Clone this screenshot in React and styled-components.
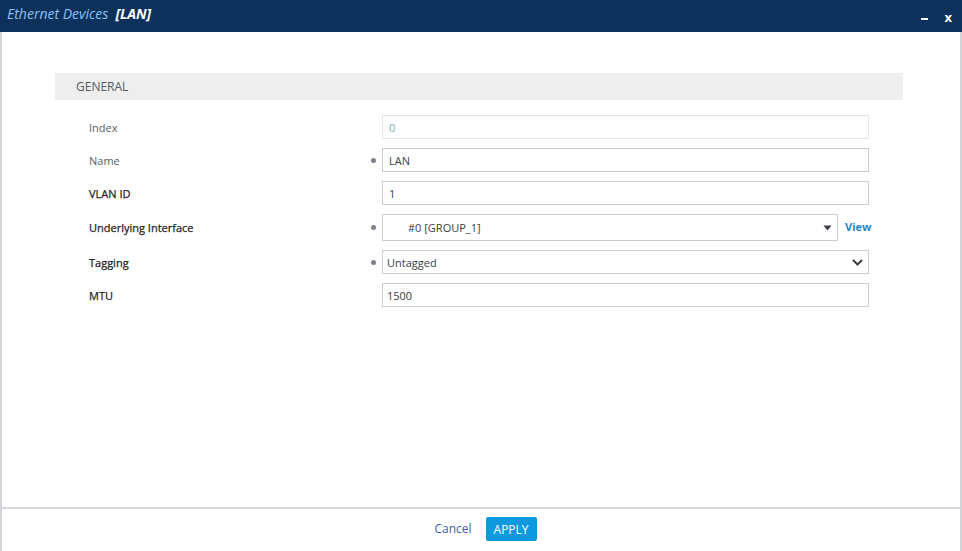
import React from "react";
import styled, { createGlobalStyle } from "styled-components";

const Global = createGlobalStyle`
  html, body { margin: 0; padding: 0; background: #fff; }
  body { font-family: "Open Sans", "Noto Sans", sans-serif; }
  * { box-sizing: border-box; }
`;

const Frame = styled.div`
  width: 962px;
  height: 551px;
  display: flex;
  flex-direction: column;
  background: #fff;
  overflow: hidden;
`;

const Header = styled.div`
  height: 32px;
  flex: none;
  background: #0b315c;
  display: flex;
  align-items: center;
  padding: 0 10px 0 7px;
`;

const Title = styled.div`
  flex: 1;
  font-style: italic;
  font-size: 14px;
  color: #8fc0f2;
  display: flex;
  gap: 7px;
  margin-top: -6px;
`;

const TitleTag = styled.span`
  color: #fff;
  font-weight: 700;
`;

const WinButtons = styled.div`
  display: flex;
  align-items: center;
  gap: 16px;
  color: #fff;
  font-weight: 700;
  font-size: 13px;
  margin-top: 2px;
`;

const MinBar = styled.span`
  width: 7px;
  height: 2px;
  background: #fff;
  display: block;
  margin-top: 3px;
`;

const Body = styled.div`
  flex: 1;
  border-left: 2px solid #d3d5d9;
  border-right: 2px solid #d3d5d9;
  display: flex;
  flex-direction: column;
`;

const Content = styled.div`
  flex: 1;
  padding-top: 41px;
`;

const SectionBar = styled.div`
  margin-left: 53px;
  width: 848px;
  height: 27px;
  background: #eeeeee;
  display: flex;
  align-items: center;
  padding-left: 21px;
  font-size: 12px;
  color: #555a60;
`;

const Form = styled.div`
  display: grid;
  grid-template-columns: 278px 15px 487px;
  padding-left: 87px;
  margin-top: 15px;
  row-gap: 9px;
  align-items: center;
`;

const Label = styled.div`
  font-size: 11px;
  color: ${(p) => (p.$strong ? "#1f2328" : "#5a5e64")};
  -webkit-text-stroke: ${(p) => (p.$strong ? "0.25px #1f2328" : "0")};
`;

const Dot = styled.div`
  width: 5px;
  height: 5px;
  border-radius: 50%;
  background: ${(p) => (p.$show ? "#7d828a" : "transparent")};
  margin-left: 4px;
`;

const Field = styled.div`
  height: ${(p) => (p.$tall ? 27 : 24)}px;
  border: 1px solid ${(p) => (p.$light ? "#e3e5e8" : "#c9cdd3")};
  display: flex;
  align-items: center;
  padding-left: ${(p) => p.$indent || 6}px;
  padding-right: ${(p) => p.$endPad || 6}px;
  font-size: 11px;
  color: ${(p) => (p.$muted ? "#7fa7b8" : "#3a3e44")};
  background: #fff;
`;

const SelectField = styled(Field)`
  width: 456px;
  flex: none;
`;

const FieldText = styled.span`
  flex: 1;
`;

const InlineRow = styled.div`
  display: flex;
  align-items: center;
  gap: 7px;
`;

const ViewLink = styled.span`
  color: #1f87c9;
  font-weight: 700;
  font-size: 11px;
  margin-top: -3px;
`;

const Footer = styled.div`
  height: 44px;
  flex: none;
  border-top: 2px solid #d5d8dc;
  display: flex;
  justify-content: center;
  align-items: flex-start;
  padding-top: 8px;
  gap: 14px;
  padding-left: 9px;
`;

const CancelLink = styled.span`
  color: #3a5fb0;
  font-size: 12px;
  line-height: 24px;
`;

const ApplyButton = styled.button`
  height: 24px;
  padding: 0 8px;
  border: none;
  border-radius: 2px;
  background: #0e98df;
  color: #fff;
  font-family: inherit;
  font-size: 12px;
`;

const Caret = () => (
  <svg width="9" height="6" viewBox="0 0 9 6">
    <path d="M0.5 0.5 H8.5 L4.5 5.5 Z" fill="#3a3e44" />
  </svg>
);

const Chevron = () => (
  <svg width="11" height="7" viewBox="0 0 11 7">
    <path d="M1 1 L5.5 5.5 L10 1" stroke="#3a3e44" strokeWidth="2" fill="none" />
  </svg>
);

export default function App() {
  return (
    <Frame>
      <Global />
      <Header>
        <Title>
          <span>Ethernet Devices</span>
          <TitleTag>[LAN]</TitleTag>
        </Title>
        <WinButtons>
          <MinBar />
          <span>x</span>
        </WinButtons>
      </Header>
      <Body>
        <Content>
          <SectionBar>GENERAL</SectionBar>
          <Form>
            <Label>Index</Label>
            <Dot />
            <Field $light $muted>0</Field>

            <Label>Name</Label>
            <Dot $show />
            <Field>LAN</Field>

            <Label $strong>VLAN ID</Label>
            <Dot />
            <Field>1</Field>

            <Label $strong>Underlying Interface</Label>
            <Dot $show />
            <InlineRow>
              <SelectField $tall $indent={25} $endPad={5}>
                <FieldText>#0 [GROUP_1]</FieldText>
                <Caret />
              </SelectField>
              <ViewLink>View</ViewLink>
            </InlineRow>

            <Label $strong>Tagging</Label>
            <Dot $show />
            <Field $indent={4} $endPad={5}>
              <FieldText>Untagged</FieldText>
              <Chevron />
            </Field>

            <Label $strong>MTU</Label>
            <Dot />
            <Field $indent={4}>1500</Field>
          </Form>
        </Content>
        <Footer>
          <CancelLink>Cancel</CancelLink>
          <ApplyButton>APPLY</ApplyButton>
        </Footer>
      </Body>
    </Frame>
  );
}
